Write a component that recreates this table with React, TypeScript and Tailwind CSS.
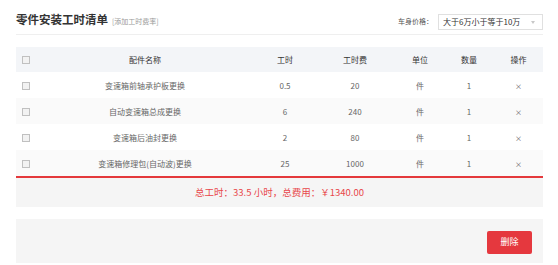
const rows = [
  { name: "变速箱前轴承护板更换", hours: "0.5", fee: "20" },
  { name: "自动变速箱总成更换", hours: "6", fee: "240" },
  { name: "变速箱后油封更换", hours: "2", fee: "80" },
  { name: "变速箱修理包(自动波)更换", hours: "25", fee: "1000" },
];

const cols = "grid grid-cols-[18px_222px_58px_82px_48px_50px_49px] items-center";

function Check() {
  return (
    <span className="block w-[8px] h-[8px] border border-[#c0c0c0] bg-[#f2f2f2] ml-[6px]" />
  );
}

export default function App() {
  return (
    <div
      className="w-[558px] h-[265px] bg-white overflow-hidden"
      style={{ fontFamily: '"Noto Sans CJK SC", "Liberation Sans", sans-serif' }}
    >
      <div className="ml-4 w-[527px]">
        {/* title bar */}
        <div className="flex h-[35px] items-center justify-between border-b border-[#efefef] pt-[5px]">
          <div className="flex items-baseline">
            <span className="text-[11.5px] font-bold text-[#333] leading-none">零件安装工时清单</span>
            <span className="ml-[4px] text-[7px] text-[#999] leading-none">[添加工时费率]</span>
          </div>
          <div className="flex items-center mt-[4px]">
            <span className="text-[7px] text-[#555] mr-[5px]">车身价格：</span>
            <div className="relative flex h-[16px] w-[105px] items-center border border-[#e0e0e0] pl-[4px]">
              <span className="text-[8px] text-[#333] leading-none">大于6万小于等于10万</span>
              <span className="absolute right-[7px] top-[6px] border-x-[2.5px] border-t-[3px] border-x-transparent border-t-[#c8c8c8]" />
            </div>
          </div>
        </div>

        {/* table */}
        <div className="mt-[12px]">
          <div className={`${cols} h-[25px] bg-[#f3f5f8] text-[8px] text-[#333] text-center`}>
            <Check />
            <span>配件名称</span>
            <span>工时</span>
            <span>工时费</span>
            <span>单位</span>
            <span>数量</span>
            <span>操作</span>
          </div>
          {rows.map((r, i) => (
            <div
              key={i}
              className={`${cols} h-[26px] pt-[2px] text-[8px] text-[#666] text-center ${i % 2 === 1 ? "bg-[#fafafa]" : "bg-white"}`}
            >
              <Check />
              <span>{r.name}</span>
              <span>{r.hours}</span>
              <span>{r.fee}</span>
              <span>件</span>
              <span>1</span>
              <span className="text-[7px] text-[#555]">×</span>
            </div>
          ))}
          <div className="h-[2px] bg-[#e4393c]" />
          <div className="flex h-[29px] items-center justify-center bg-[#f5f5f5] text-[9.5px] text-[#e8474b]">
            总工时：33.5 小时，总费用：￥1340.00
          </div>
        </div>

        {/* actions */}
        <div className="mt-[12px] flex h-[44px] items-center justify-end bg-[#f5f5f5] pr-[11px]">
          <button className="mt-[2px] h-[23px] w-[45px] rounded-[2px] bg-[#e5383e] text-[9px] text-white">
            删除
          </button>
        </div>
      </div>
    </div>
  );
}
